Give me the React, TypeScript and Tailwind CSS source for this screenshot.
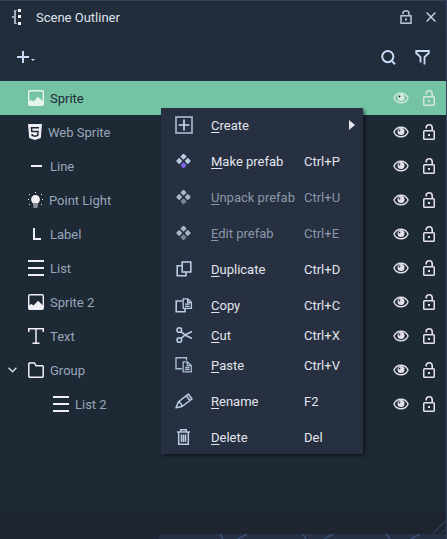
import React from "react";

type IconProps = { className?: string };

function OutlinerIcon() {
  return (
    <svg width="10" height="16" viewBox="0 0 10 16" fill="none" shapeRendering="crispEdges" aria-hidden="true">
      <path d="M2 1h3v1H4v12h1v1H2V9H0V7h2z" fill="#a9aebb" />
      <path d="M6 0h3v3H6zM6 6h3v3H6zM6 13h3v3H6z" fill="#f4f2f6" />
    </svg>
  );
}

function LockIcon({ className }: IconProps) {
  return (
    <svg className={className} viewBox="0 0 12 16" fill="none" aria-hidden="true">
      <rect x="0.75" y="6.75" width="10.5" height="8.5" rx="0.8" stroke="currentColor" strokeWidth="1.5" />
      <path d="M9.2 6.5V3.8C9.2 2 8 0.8 6.2 0.8S3.2 2 3.2 3.6v.8" stroke="currentColor" strokeWidth="1.6" />
      <rect x="5" y="10" width="2" height="2" fill="currentColor" />
    </svg>
  );
}

function PanelLockIcon() {
  return (
    <svg width="12" height="14" viewBox="0 0 12 14" fill="none" aria-hidden="true">
      <rect x="1" y="5.800" width="10" height="7.400" stroke="currentColor" strokeWidth="1.600" />
      <path d="M9 5.500V3.500C9 1.800 7.800 0.800 6 0.800S3 1.800 3 3.500V4.200" stroke="currentColor" strokeWidth="1.600" />
      <rect x="5" y="8.500" width="2" height="2" fill="currentColor" />
    </svg>
  );
}

function CloseIcon() {
  return (
    <svg width="10" height="10" viewBox="0 0 10 10" fill="none" aria-hidden="true">
      <path d="M0.6 0.6l8.8 8.8M9.4 0.6L0.6 9.4" stroke="#c3d3e8" strokeWidth="1.4" />
    </svg>
  );
}

function AddIcon() {
  return (
    <svg width="18" height="12" viewBox="0 0 18 12" aria-hidden="true">
      <path d="M5 0h2v5h5v2H7v5H5V7H0V5h5z" fill="#c9dcf6" />
      <path d="M14 8h4l-2 2z" fill="#c9dcf6" />
    </svg>
  );
}

function SearchIcon() {
  return (
    <svg width="15" height="15" viewBox="0 0 15 15" fill="none" aria-hidden="true">
      <circle cx="6.8" cy="6.6" r="5.6" stroke="#c9dcf6" strokeWidth="2" />
      <path d="M10.6 10.6l3.4 3.6" stroke="#c9dcf6" strokeWidth="2" />
    </svg>
  );
}

function FilterIcon() {
  return (
    <svg width="15" height="15" viewBox="0 0 15 15" fill="none" aria-hidden="true">
      <path d="M5.5 12.5V7.2L1.2 3V1h12.6v2L9.5 7.2V14.5" stroke="#c9dcf6" strokeWidth="1.8" />
    </svg>
  );
}

function EyeIcon() {
  return (
    <svg width="16" height="12" viewBox="0 0 16 12" fill="none" aria-hidden="true">
      <path d="M0.9 6C2.3 3 5 1.2 8 1.2S13.700 3 15.100 6C13.700 9 11 10.800 8 10.800S2.300 9 0.900 6z" stroke="currentColor" strokeWidth="1.4" />
      <circle cx="8" cy="5.500" r="3.500" fill="currentColor" />
      <circle cx="6.500" cy="4.500" r="0.900" fill="#1e2936" />
    </svg>
  );
}

function PictureIcon() {
  return (
    <svg width="16" height="16" viewBox="0 0 16 16" fill="none" aria-hidden="true">
      <rect x="0.7" y="0.7" width="14.600" height="14.600" rx="1.300" stroke="currentColor" strokeWidth="1.400" />
      <path d="M1 11.200L3.500 10 5.500 11.500 10 6.800 15 11.500V15H1z" fill="currentColor" />
    </svg>
  );
}

function Html5Icon() {
  return (
    <svg width="14" height="16" viewBox="0 0 14 16" fill="none" aria-hidden="true">
      <path d="M0 0h14l-1.200 14L7 16l-5.800-2z" fill="currentColor" />
      <path d="M11 3.700H3.500l.3 3.800h6.300l-.4 4L7 12.300l-2.800-.8-.1-1.500" stroke="#1e2936" strokeWidth="1.500" />
    </svg>
  );
}

function LineIcon() {
  return (
    <svg width="16" height="16" viewBox="0 0 16 16" aria-hidden="true">
      <path d="M3 7h11v2H3z" fill="currentColor" />
    </svg>
  );
}

function BulbIcon() {
  return (
    <svg width="15" height="16" viewBox="0 0 15 16" aria-hidden="true">
      <path
        d="M7.500 3a4.400 4.400 0 0 1 4.400 4.400c0 1.900-1.200 2.800-1.900 4.100H5C4.300 10.200 3.100 9.300 3.100 7.400A4.400 4.400 0 0 1 7.500 3zM5 12.500h5v1H5zM5.500 14.500h4v1h-4z"
        fill="currentColor"
      />
      <path d="M7 0h1v1H7zM1 2h1v1H1zM13 2h1v1h-1zM0 7h1v1H0zM14 7h1v1h-1zM1 12h1v1H1zM13 12h1v1h-1z" fill="currentColor" />
    </svg>
  );
}

function LabelIcon() {
  return (
    <svg width="16" height="16" viewBox="0 0 16 16" aria-hidden="true">
      <path d="M5 2h2v10h6v2H5z" fill="currentColor" />
    </svg>
  );
}

function ListIcon() {
  return (
    <svg width="16" height="16" viewBox="0 0 16 16" aria-hidden="true">
      <path d="M0 0h16v2H0zM0 7h16v2H0zM0 14h16v2H0z" fill="currentColor" />
    </svg>
  );
}

function TextIcon() {
  return (
    <svg width="16" height="16" viewBox="0 0 16 16" fill="none" aria-hidden="true">
      <path d="M0.700 4V0.800h14.600V4M8 1v14M4.500 15.200h7" stroke="currentColor" strokeWidth="1.500" />
    </svg>
  );
}

function FolderIcon() {
  return (
    <svg width="16" height="16" viewBox="0 0 16 16" fill="none" aria-hidden="true">
      <path d="M1.500 0.900H6.500L8 3.700H14.500l.7.700V14.500l-.7.700H1.500l-.7-.7V1.600z" stroke="currentColor" strokeWidth="1.500" />
    </svg>
  );
}

function ChevronIcon() {
  return (
    <svg width="9" height="6" viewBox="0 0 9 6" fill="none" aria-hidden="true">
      <path d="M0.600 0.800L4.500 4.700 8.400 0.800" stroke="#d5dae2" strokeWidth="1.400" />
    </svg>
  );
}

function CreateIcon() {
  return (
    <svg width="18" height="18" viewBox="0 0 18 18" fill="none" aria-hidden="true">
      <rect x="1" y="1" width="16" height="16" stroke="#a3b6cf" strokeWidth="1.700" />
      <path d="M9 3.500v11M3.500 9h11" stroke="#c3d5ec" strokeWidth="1.700" />
    </svg>
  );
}

function PrefabIcon({ main, accent }: { main: string; accent: string }) {
  return (
    <svg width="18" height="18" viewBox="0 0 18 18" strokeWidth="1.600" strokeLinejoin="round" aria-hidden="true">
      <path d="M8.500 2.500l2.100 2.100-2.100 2.100-2.100-2.100zM4.200 6.900l2.100 2.100-2.100 2.100L2.100 9zM12.800 6.900l2.100 2.100-2.100 2.100L10.700 9z" fill={main} stroke={main} />
      <path d="M8.500 11.200l2.100 2.100-2.100 2.100-2.100-2.100z" fill={accent} stroke={accent} />
    </svg>
  );
}

function DuplicateIcon() {
  return (
    <svg width="18" height="18" viewBox="0 0 18 18" fill="none" stroke="#b9cce4" strokeWidth="1.600" aria-hidden="true">
      <path d="M7 5.700H2.200v10.100H11V12.300" />
      <rect x="7.200" y="2" width="8.600" height="10" />
    </svg>
  );
}

function CopyIcon() {
  return (
    <svg width="18" height="18" viewBox="0 0 18 18" fill="none" stroke="#b9cce4" strokeWidth="1.600" aria-hidden="true">
      <path d="M7.500 5H1.200V15.800H10V13" />
      <path d="M8.200 2.800h4.600l3.600 3.500v6H8.200zM12.600 3v3.500h3.600M10 8.200h4.600M10 10.300h4.600" strokeWidth="1.300" />
    </svg>
  );
}

function CutIcon() {
  return (
    <svg width="18" height="18" viewBox="0 0 18 18" fill="none" stroke="#b9cce4" strokeWidth="1.600" aria-hidden="true">
      <circle cx="4.300" cy="4" r="2.300" />
      <circle cx="4.300" cy="14" r="2.300" />
      <path d="M6 5.600L10.500 9.300 17 12.500M6 12.400L10.500 8.700 17 5.500" />
    </svg>
  );
}

function PasteIcon() {
  return (
    <svg width="18" height="18" viewBox="0 0 18 18" fill="none" stroke="#a9bbd3" strokeWidth="1.400" aria-hidden="true">
      <path d="M7 12.800H1V1.800h10.500V4.500" />
      <path d="M8.200 5.800h4.300l3.800 3.700v6.300H8.200zM12.300 6v3.700h3.800M10 11.500h4.500M10 13.500h4.500" strokeWidth="1.300" />
    </svg>
  );
}

function PencilIcon() {
  return (
    <svg width="18" height="18" viewBox="0 0 18 18" fill="none" stroke="#b9cce4" strokeWidth="1.500" strokeLinejoin="round" aria-hidden="true">
      <path d="M1 15.800L3.200 10.200 13.300 2 17 7 7 14.500zM3.200 10.200Q6.500 10.500 7 14.500M11.300 3.800l3.500 4.700" />
    </svg>
  );
}

function TrashIcon() {
  return (
    <svg width="18" height="18" viewBox="0 0 18 18" fill="none" stroke="#b9cce4" strokeWidth="1.500" aria-hidden="true">
      <path d="M2 4h13M5.800 3.700V1.800h5.400v1.900M3.700 4v12.300h9.600V4M6.500 6.500v7.500M8.500 6.500v7.500M10.500 6.500v7.500" />
    </svg>
  );
}

type Node = { name: string; icon: React.ReactNode; selected?: boolean; open?: boolean; depth?: number };

const nodes: Node[] = [
  { name: "Sprite", icon: <PictureIcon />, selected: true },
  { name: "Web Sprite", icon: <Html5Icon /> },
  { name: "Line", icon: <LineIcon /> },
  { name: "Point Light", icon: <BulbIcon /> },
  { name: "Label", icon: <LabelIcon /> },
  { name: "List", icon: <ListIcon /> },
  { name: "Sprite 2", icon: <PictureIcon /> },
  { name: "Text", icon: <TextIcon /> },
  { name: "Group", icon: <FolderIcon />, open: true },
  { name: "List 2", icon: <ListIcon />, depth: 1 },
];

function TreeRow({ name, icon, selected, open, depth }: Node) {
  return (
    <li
      className={`flex h-[34px] items-center pr-[11px] ${
        selected ? "bg-[#74c3a5] text-[#1e2a37]" : "text-[#98a6b8]"
      } ${depth ? "pl-[25px]" : ""}`}
    >
      <div className="flex w-7 shrink-0 pl-2">
        {open && (
          <button type="button" aria-label={`Collapse ${name}`}>
            <ChevronIcon />
          </button>
        )}
      </div>
      <span className={selected ? "text-[#e6f4ee]" : "text-[#f0edf4]"}>{icon}</span>
      <span className="ml-1.5 flex-1 pt-0.5">{name}</span>
      <div className={`flex items-center gap-3.5 ${selected ? "text-[#d3e9e0]" : "text-[#e4e1ea]"}`}>
        <button type="button" aria-label={`Toggle visibility of ${name}`}>
          <EyeIcon />
        </button>
        <button type="button" aria-label={`Toggle lock of ${name}`}>
          <LockIcon className="h-4 w-3" />
        </button>
      </div>
    </li>
  );
}

type Action = { label: string; keys?: string; icon: React.ReactNode; disabled?: boolean; submenu?: boolean };

const groups: Action[][] = [
  [{ label: "Create", icon: <CreateIcon />, submenu: true }],
  [{ label: "Make prefab", keys: "Ctrl+P", icon: <PrefabIcon main="#b9cce4" accent="#8064f0" /> }],
  [{ label: "Unpack prefab", keys: "Ctrl+U", icon: <PrefabIcon main="#a9b6c6" accent="#7b8694" />, disabled: true }],
  [{ label: "Edit prefab", keys: "Ctrl+E", icon: <PrefabIcon main="#a9b6c6" accent="#7b8694" />, disabled: true }],
  [{ label: "Duplicate", keys: "Ctrl+D", icon: <DuplicateIcon /> }],
  [
    { label: "Copy", keys: "Ctrl+C", icon: <CopyIcon /> },
    { label: "Cut", keys: "Ctrl+X", icon: <CutIcon /> },
    { label: "Paste", keys: "Ctrl+V", icon: <PasteIcon /> },
  ],
  [{ label: "Rename", keys: "F2", icon: <PencilIcon /> }],
  [{ label: "Delete", keys: "Del", icon: <TrashIcon /> }],
];

function MenuItem({ label, keys, icon, disabled, submenu }: Action) {
  return (
    <button
      type="button"
      role="menuitem"
      disabled={disabled}
      className={`flex h-[30px] w-full items-center pr-2 pl-3.5 text-left ${
        disabled ? "text-[#8a97a9]" : "text-[#e2e5ec]"
      }`}
    >
      {icon}
      <span className="ml-[18px] w-[93px] pt-0.5 whitespace-nowrap">
        <span className="underline underline-offset-2">{label[0]}</span>
        {label.slice(1)}
      </span>
      <span className="flex-1 pt-0.5">{keys}</span>
      {submenu && (
        <svg width="6" height="10" viewBox="0 0 6 10" aria-hidden="true">
          <path d="M0 0l6 5-6 5z" fill="#e8e6ee" />
        </svg>
      )}
    </button>
  );
}

function ContextMenu() {
  return (
    <div
      role="menu"
      className="absolute top-[107px] left-[161px] flex w-[202px] flex-col gap-1.5 bg-[#263040] py-0.5 shadow-[2px_2px_3px_rgba(0,0,0,0.5)]"
    >
      {groups.map((group) => (
        <div key={group[0].label} role="group">
          {group.map((action) => (
            <MenuItem key={action.label} {...action} />
          ))}
        </div>
      ))}
    </div>
  );
}

export default function App() {
  return (
    <div className="relative flex min-h-screen flex-col border-t border-r border-t-[#34435a] border-r-[#34435a] bg-[#1e2936] font-[Roboto,'Liberation_Sans',sans-serif] text-[13px] leading-4">
      <header className="flex h-8 items-center border-b border-[#1f2937] bg-[#222d3c] pr-2.5 pl-3">
        <OutlinerIcon />
        <h1 className="ml-3.5 flex-1 pt-0.5 text-[#dfe3ea]">Scene Outliner</h1>
        <button type="button" aria-label="Lock panel" className="mr-3.5 text-[#b4bfce]">
          <PanelLockIcon />
        </button>
        <button type="button" aria-label="Close panel">
          <CloseIcon />
        </button>
      </header>
      <div className="flex h-12 items-center bg-[#222d3c] pr-4 pl-[17px]">
        <button type="button" aria-label="Add object">
          <AddIcon />
        </button>
        <div className="ml-auto flex gap-[19px]">
          <button type="button" aria-label="Search">
            <SearchIcon />
          </button>
          <button type="button" aria-label="Filter">
            <FilterIcon />
          </button>
        </div>
      </div>
      <ul className="flex-1">
        {nodes.map((node) => (
          <TreeRow key={node.name} {...node} />
        ))}
      </ul>
      <footer className="flex h-[23px] items-end justify-end bg-[#1f2530]">
        <svg width="13" height="13" viewBox="0 0 13 13" fill="none" stroke="#34506f" aria-hidden="true">
          <path d="M0 12.500L12.500 0M8 12.500L12.500 8" />
        </svg>
      </footer>
      <div className="flex h-[5px] bg-[#1d2632] pl-[159px]">
        <div className="flex-1 overflow-hidden bg-[#263144]">
          <svg width="288" height="5" viewBox="0 0 288 5" fill="none" stroke="#3c4f78" strokeWidth="1.500" aria-hidden="true">
            <path d="M61 0l3 5M88 0l-9 5M144 0l3 5M174 0l-9 5M227 0l4 5M261 0l-9 5" />
          </svg>
        </div>
      </div>
      <ContextMenu />
    </div>
  );
}
